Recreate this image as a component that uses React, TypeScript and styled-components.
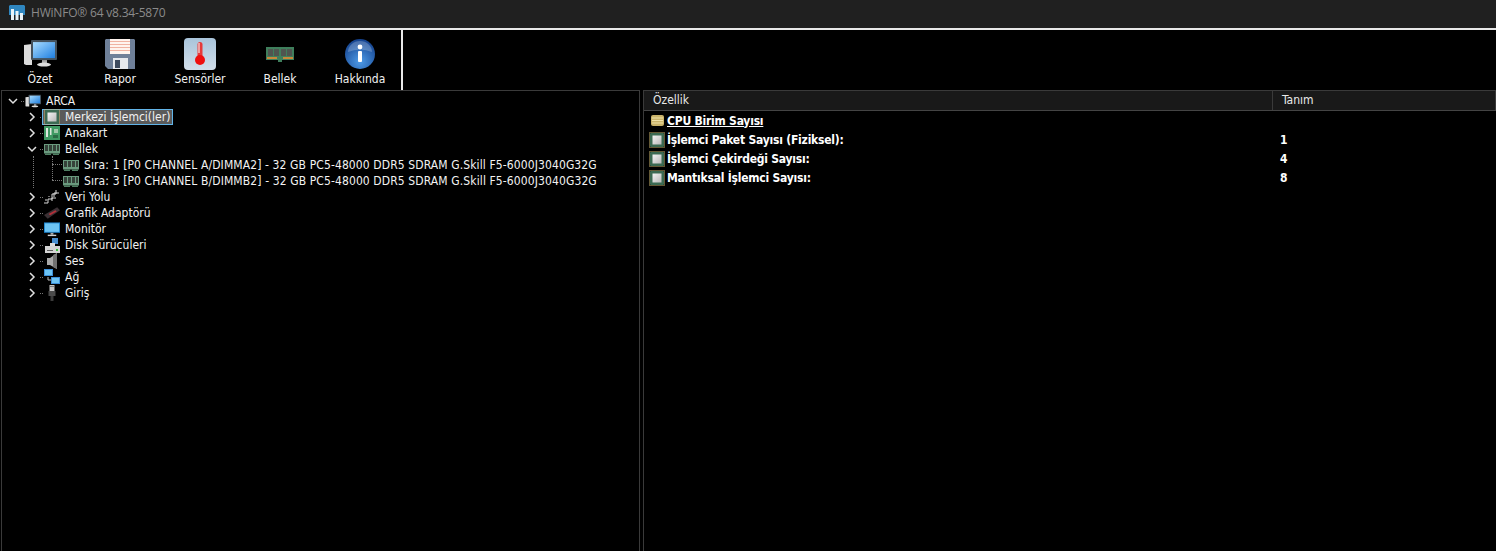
import React from 'react'
import styled, { createGlobalStyle } from 'styled-components'

const Global = createGlobalStyle`
  html, body { margin: 0; padding: 0; background: #000; }
  body { width: 1496px; height: 551px; overflow: hidden; }
  * { box-sizing: border-box; }
`

// ── window shell ────────────────────────────────
const Shell = styled.div`
  width: 1496px;
  height: 551px;
  display: flex;
  flex-direction: column;
  background: #000;
  font-family: "DejaVu Sans Condensed", "DejaVu Sans", sans-serif;
  font-stretch: condensed;
  font-size: 12px;
  color: #f2f2f2;
  overflow: hidden;
`

const TitleBar = styled.div`
  height: 30px;
  flex: none;
  background: #202020;
  display: flex;
  align-items: center;
  gap: 6px;
  padding: 0 0 3px 9px;
  color: #8b8b8b;
  font-family: "Open Sans", "Noto Sans", sans-serif;
  font-stretch: normal;
  font-size: 12px;
  letter-spacing: -0.2px;
  border-bottom: 2px solid #e8e8e8;
`

const Toolbar = styled.div`
  height: 60px;
  flex: none;
  display: flex;
`

const ToolGroup = styled.div`
  width: 403px;
  display: flex;
  border-right: 2px solid #e8e8e8;
`

const ToolButton = styled.div`
  width: 80px;
  display: flex;
  flex-direction: column;
  align-items: center;
  padding-top: 8px;
  color: #f0f0f0;
  line-height: 16px;
`

const ToolIcon = styled.div`
  height: 32px;
  margin-bottom: 1px;
  display: flex;
  align-items: center;
`

const Main = styled.div`
  flex: 1;
  display: flex;
  min-height: 0;
`

const TreePanel = styled.div`
  width: 639px;
  margin-left: 1px;
  border: 1px solid #3a3a3a;
  border-bottom: none;
  padding-top: 2px;
  position: relative;
`

const ListPanel = styled.div`
  flex: 1;
  margin-left: 3px;
  border-top: 1px solid #3a3a3a;
  border-left: 1px solid #3a3a3a;
`

// ── tree ────────────────────────────────────────
const TreeRow = styled.div<{ $depth: number }>`
  height: 16px;
  display: flex;
  align-items: center;
  padding-left: ${({ $depth }) => 5 + $depth * 19}px;
  white-space: nowrap;
`

const Chevron = styled.svg`
  width: 12px;
  height: 12px;
  flex: none;
  margin-right: 2px;
`

const Spacer = styled.div`
  width: 18px;
  flex: none;
`

const Dots = styled.div`
  width: 3px;
  flex: none;
  border-top: 1px dotted #777;
  margin-right: 1px;
`

const TreeIcon = styled.div`
  width: 16px;
  height: 16px;
  flex: none;
  margin-right: 3px;
  display: flex;
  align-items: center;
  justify-content: center;
`

const Label = styled.span`
  line-height: 14px;
  padding: 0 2px;
`

const DimmLabel = styled(Label)`
  letter-spacing: 0.11px;
`

const SelectBox = styled.div`
  display: flex;
  align-items: center;
  height: 16px;
  margin-left: -2px;
  padding-left: 1px;
  border: 1px solid #62b4e8;
  background: #5a5a5a;
`

// dotted guide lines under the open "Bellek" node
const GuideLine = styled.div<{ $left: number; $top: number; $w?: number; $h?: number }>`
  position: absolute;
  left: ${({ $left }) => $left}px;
  top: ${({ $top }) => $top}px;
  width: ${({ $w }) => $w ?? 0}px;
  height: ${({ $h }) => $h ?? 0}px;
  border-left: ${({ $h }) => ($h ? '1px dotted #777' : 'none')};
  border-top: ${({ $w }) => ($w ? '1px dotted #777' : 'none')};
`

// ── list ────────────────────────────────────────
const HeaderRow = styled.div`
  height: 20px;
  display: flex;
  background: #191919;
  border-bottom: 1px solid #444;
  color: #e8e8e8;
  line-height: 18px;
`

const HeaderCell = styled.div<{ $w?: number }>`
  width: ${({ $w }) => ($w ? `${$w}px` : 'auto')};
  flex: ${({ $w }) => ($w ? 'none' : 1)};
  padding-left: 9px;
  border-right: 1px solid #3a3a3a;
`

const ListRow = styled.div`
  height: 19px;
  display: flex;
  align-items: center;
  padding-left: 5px;
  font-weight: 700;
  color: #fff;
  white-space: nowrap;
`

const PropCell = styled.div`
  width: 631px;
  flex: none;
  display: flex;
  align-items: center;
  letter-spacing: -0.22px;
`

const PropIcon = styled(TreeIcon)`
  margin-right: 2px;
`

const GroupTitle = styled.span`
  text-decoration: underline;
`

// ── drawn icons ─────────────────────────────────
const PcIcon = ({ size = 34 }: { size?: number }) => (
  <svg width={size} height={size * 0.8} viewBox="0 0 34 27">
    <defs>
      <linearGradient id="scr" x1="0" y1="0" x2="1" y2="1">
        <stop offset="0" stopColor="#a8dcff" />
        <stop offset="1" stopColor="#1f7fe0" />
      </linearGradient>
    </defs>
    <path d="M1 5l8-1v21l-6 0-2-1z" fill="#dcdcdc" />
    <rect x="8" y="0" width="26" height="20" rx="1" fill="#45525c" />
    <rect x="10" y="2" width="22" height="16" fill="url(#scr)" />
    <rect x="19" y="20" width="5" height="3" fill="#aaa" />
    <ellipse cx="21" cy="24.500" rx="7" ry="2" fill="#ddd" />
  </svg>
)

const FloppyIcon = () => (
  <svg width="30" height="30" viewBox="0 0 30 30">
    <path d="M1 0h28l1 1v29H3l-3-3V1z" fill="#6f8099" />
    <rect x="5" y="0" width="20" height="15" fill="#fff4ee" />
    <path d="M5 2.500h20M5 5.500h20M5 8.500h20M5 11.500h20" stroke="#f0b3a2" strokeWidth="1" />
    <rect x="8" y="19" width="15" height="11" fill="#e6e9ee" />
    <rect x="10" y="21" width="5" height="8" fill="#3d4a5e" />
  </svg>
)

const ThermoIcon = () => (
  <svg width="32" height="32" viewBox="0 0 32 32">
    <defs>
      <linearGradient id="thb" x1="0" y1="0" x2="0" y2="1">
        <stop offset="0" stopColor="#a9c4da" />
        <stop offset="1" stopColor="#d2deea" />
      </linearGradient>
    </defs>
    <rect width="32" height="32" rx="4" fill="url(#thb)" />
    <rect x="13.500" y="4" width="5" height="20" rx="2.500" fill="#e63a3a" />
    <rect x="14" y="5" width="2" height="10" fill="#f0a0a0" />
    <circle cx="16" cy="22" r="5" fill="#ee0f0f" />
  </svg>
)

const RamIcon = ({ w = 28, h = 15 }: { w?: number; h?: number }) => (
  <svg width={w} height={h} viewBox="0 0 28 15">
    <path d="M0 0h28v13H16v2h-4v-2H0z" fill="#3f7f5c" />
    <path d="M2 2h5v7H2zM8 2h5v7H8zM15 2h5v7h-5zM21 2h5v7h-5z" fill="#4f5550" />
    <path d="M1 10h10v2H1zM17 10h10v2H17z" fill="#c8883a" />
  </svg>
)

const SmallRamIcon = () => (
  <svg width="16" height="11" viewBox="0 0 16 11">
    <rect width="16" height="9.500" fill="#6a9a7e" />
    <path d="M1 1h3v6H1zM5 1h3v6H5zM9 1h3v6H9zM13 1h2v6h-2z" fill="#36423a" />
    <path d="M1 9.500h6V11H1zM9 9.500h6V11H9z" fill="#4f7f62" />
  </svg>
)

const InfoIcon = () => (
  <svg width="30" height="30" viewBox="0 0 30 30">
    <defs>
      <radialGradient id="inf" cx=".5" cy=".75" r=".8">
        <stop offset="0" stopColor="#4d9be8" />
        <stop offset="1" stopColor="#0f3a86" />
      </radialGradient>
    </defs>
    <circle cx="15" cy="15" r="15" fill="url(#inf)" />
    <path d="M3 13a12 11 0 0 1 24 0q-12-5-24 0z" fill="#fff" fillOpacity=".22" />
    <circle cx="15" cy="8" r="2.400" fill="#fff" />
    <rect x="13" y="12" width="4" height="11" rx="1" fill="#fff" />
  </svg>
)

const CpuIcon = () => (
  <svg width="16" height="16" viewBox="0 0 16 16">
    <defs>
      <linearGradient id="die" x1="0" y1="0" x2="1" y2="1">
        <stop offset="0" stopColor="#f4f4f4" />
        <stop offset="1" stopColor="#b8b8b8" />
      </linearGradient>
    </defs>
    <rect x="1" y="1" width="14" height="14" rx="1" fill="#3b6a52" />
    <rect x=".5" y=".5" width="15" height="15" fill="none" stroke="#c9b36a" strokeWidth="1" strokeDasharray="1 1" />
    <rect x="3.500" y="3.500" width="9" height="9" fill="url(#die)" />
  </svg>
)

const BoardIcon = () => (
  <svg width="16" height="14" viewBox="0 0 16 14">
    <rect width="16" height="14" fill="#3f9a63" />
    <rect x="2" y="2" width="2" height="9" fill="#dfe9df" />
    <rect x="6" y="2" width="1.500" height="7" fill="#dfe9df" />
    <rect x="10" y="3" width="4" height="4" fill="#9ec7a8" />
    <rect x="9" y="9" width="5" height="3" fill="#2b6b45" />
  </svg>
)

const BusIcon = () => (
  <svg width="16" height="16" viewBox="0 0 16 16" fill="none" stroke="#d8d8d8" strokeWidth="1">
    <path d="M0 14h4v-4h4V5h4V1M1 11h2M5 8v-1M10 8V4h5M8 12V9h4" />
  </svg>
)

const GpuIcon = () => (
  <svg width="17" height="12" viewBox="0 0 17 12">
    <path d="M0 8L14 0l3 3L4 12z" fill="#3a3034" />
    <path d="M5 7l7-4 1.500 1.500-7 4z" fill="#b4303a" />
  </svg>
)

const MonitorIcon = () => (
  <svg width="17" height="15" viewBox="0 0 17 15">
    <rect width="17" height="11" fill="#1e86d0" />
    <rect x="1" y="1" width="15" height="9" fill="#6cc4f4" />
    <rect x="7" y="11" width="3" height="2" fill="#aaa" />
    <rect x="4" y="13" width="9" height="1.500" fill="#cfcfcf" />
  </svg>
)

const DiskIcon = () => (
  <svg width="15" height="15" viewBox="0 0 15 15">
    <rect x="7" y="0" width="6" height="6" fill="#4a8fd0" />
    <path d="M5 5h5v3H5z" fill="#ddd" />
    <path d="M0 8h15v7H0z" fill="#d4d4d4" />
    <rect x="2" y="12" width="6" height="1" fill="#5a5a5a" />
    <rect x="11" y="11" width="2" height="2" fill="#3ac43a" />
  </svg>
)

const SpeakerIcon = () => (
  <svg width="10" height="16" viewBox="0 0 10 16">
    <path d="M0 5h3l7-5v16l-7-4H0z" fill="#a9a9a9" />
    <path d="M6 2l4-2v16l-4-2z" fill="#707070" />
  </svg>
)

const NetIcon = () => (
  <svg width="16" height="16" viewBox="0 0 16 16">
    <rect x="0" y="0" width="9" height="7" fill="#3d8fd8" />
    <rect x="7" y="8" width="9" height="7" fill="#3d8fd8" />
    <path d="M1 1h7v5H1zM8 9h7v5H8z" fill="#6cc4f4" />
    <path d="M4 8v3h3" stroke="#bbb" fill="none" />
  </svg>
)

const UsbIcon = () => (
  <svg width="8" height="16" viewBox="0 0 8 16">
    <rect x="1.500" y="0" width="5" height="6" fill="#c4c4c4" />
    <rect x="2.500" y="1" width="1" height="1" fill="#333" />
    <rect x="4.500" y="1" width="1" height="1" fill="#333" />
    <rect x="0.500" y="6" width="7" height="5" fill="#4a4a4a" />
    <rect x="2.500" y="11" width="3" height="5" fill="#3a3a3a" />
  </svg>
)

const StackIcon = () => (
  <svg width="13" height="11" viewBox="0 0 13 11">
    <rect width="13" height="11" rx="2" fill="#c9b36a" />
    <path d="M1 3h11M1 5.500h11M1 8h11" stroke="#f0e2a8" />
  </svg>
)

const LogoIcon = () => (
  <svg width="16" height="16" viewBox="0 0 16 16">
    <path d="M1 0h14l1 1v9H0V1z" fill="#2f86c0" />
    <path d="M0 10h16v5l-1 1H1l-1-1z" fill="#1a1f24" />
    <path d="M2 4h3v11H2zM6.500 6h3v9h-3zM11 8h3v7h-3z" fill="#e8f2f8" />
  </svg>
)

const Open = () => (
  <Chevron viewBox="0 0 12 12" fill="none" stroke="#e0e0e0" strokeWidth="1.500">
    <path d="M2 4l4 4 4-4" />
  </Chevron>
)

const Closed = () => (
  <Chevron viewBox="0 0 12 12" fill="none" stroke="#e0e0e0" strokeWidth="1.500">
    <path d="M4 2l4 4-4 4" />
  </Chevron>
)

const tools = [
  { label: 'Özet', icon: <PcIcon /> },
  { label: 'Rapor', icon: <FloppyIcon /> },
  { label: 'Sensörler', icon: <ThermoIcon /> },
  { label: 'Bellek', icon: <RamIcon /> },
  { label: 'Hakkında', icon: <InfoIcon /> },
]

const groups = [
  { label: 'Veri Yolu', icon: <BusIcon /> },
  { label: 'Grafik Adaptörü', icon: <GpuIcon /> },
  { label: 'Monitör', icon: <MonitorIcon /> },
  { label: 'Disk Sürücüleri', icon: <DiskIcon /> },
  { label: 'Ses', icon: <SpeakerIcon /> },
  { label: 'Ağ', icon: <NetIcon /> },
  { label: 'Giriş', icon: <UsbIcon /> },
]

const dimms = [
  'Sıra: 1 [P0 CHANNEL A/DIMMA2] - 32 GB PC5-48000 DDR5 SDRAM G.Skill F5-6000J3040G32G',
  'Sıra: 3 [P0 CHANNEL B/DIMMB2] - 32 GB PC5-48000 DDR5 SDRAM G.Skill F5-6000J3040G32G',
]

const props = [
  { name: 'İşlemci Paket Sayısı (Fiziksel):', value: '1' },
  { name: 'İşlemci Çekirdeği Sayısı:', value: '4' },
  { name: 'Mantıksal İşlemci Sayısı:', value: '8' },
]

export default function App() {
  return (
    <Shell>
      <Global />
      <TitleBar>
        <LogoIcon />
        <span>HWiNFO® 64 v8.34-5870</span>
      </TitleBar>

      <Toolbar>
        <ToolGroup>
          {tools.map(t => (
            <ToolButton key={t.label}>
              <ToolIcon>{t.icon}</ToolIcon>
              {t.label}
            </ToolButton>
          ))}
        </ToolGroup>
      </Toolbar>

      <Main>
        <TreePanel>
          <GuideLine $left={31} $top={65} $h={32} />
          <GuideLine $left={50} $top={65} $h={24} />
          <GuideLine $left={50} $top={73} $w={10} />
          <GuideLine $left={50} $top={89} $w={10} />

          <TreeRow $depth={0}>
            <Open />
            <Dots />
            <TreeIcon><PcIcon size={18} /></TreeIcon>
            <Label>ARCA</Label>
          </TreeRow>
          <TreeRow $depth={1}>
            <Closed />
            <Dots />
            <SelectBox>
              <TreeIcon><CpuIcon /></TreeIcon>
              <Label>Merkezi İşlemci(ler)</Label>
            </SelectBox>
          </TreeRow>
          <TreeRow $depth={1}>
            <Closed />
            <Dots />
            <TreeIcon><BoardIcon /></TreeIcon>
            <Label>Anakart</Label>
          </TreeRow>
          <TreeRow $depth={1}>
            <Open />
            <Dots />
            <TreeIcon><SmallRamIcon /></TreeIcon>
            <Label>Bellek</Label>
          </TreeRow>
          {dimms.map(d => (
            <TreeRow $depth={2} key={d}>
              <Spacer />
              <TreeIcon><SmallRamIcon /></TreeIcon>
              <DimmLabel>{d}</DimmLabel>
            </TreeRow>
          ))}
          {groups.map(g => (
            <TreeRow $depth={1} key={g.label}>
              <Closed />
              <Dots />
              <TreeIcon>{g.icon}</TreeIcon>
              <Label>{g.label}</Label>
            </TreeRow>
          ))}
        </TreePanel>

        <ListPanel>
          <HeaderRow>
            <HeaderCell $w={629}>Özellik</HeaderCell>
            <HeaderCell>Tanım</HeaderCell>
          </HeaderRow>
          <ListRow>
            <PropCell>
              <PropIcon><StackIcon /></PropIcon>
              <GroupTitle>CPU Birim Sayısı</GroupTitle>
            </PropCell>
          </ListRow>
          {props.map(p => (
            <ListRow key={p.name}>
              <PropCell>
                <PropIcon><CpuIcon /></PropIcon>
                {p.name}
              </PropCell>
              <span>{p.value}</span>
            </ListRow>
          ))}
        </ListPanel>
      </Main>
    </Shell>
  )
}
